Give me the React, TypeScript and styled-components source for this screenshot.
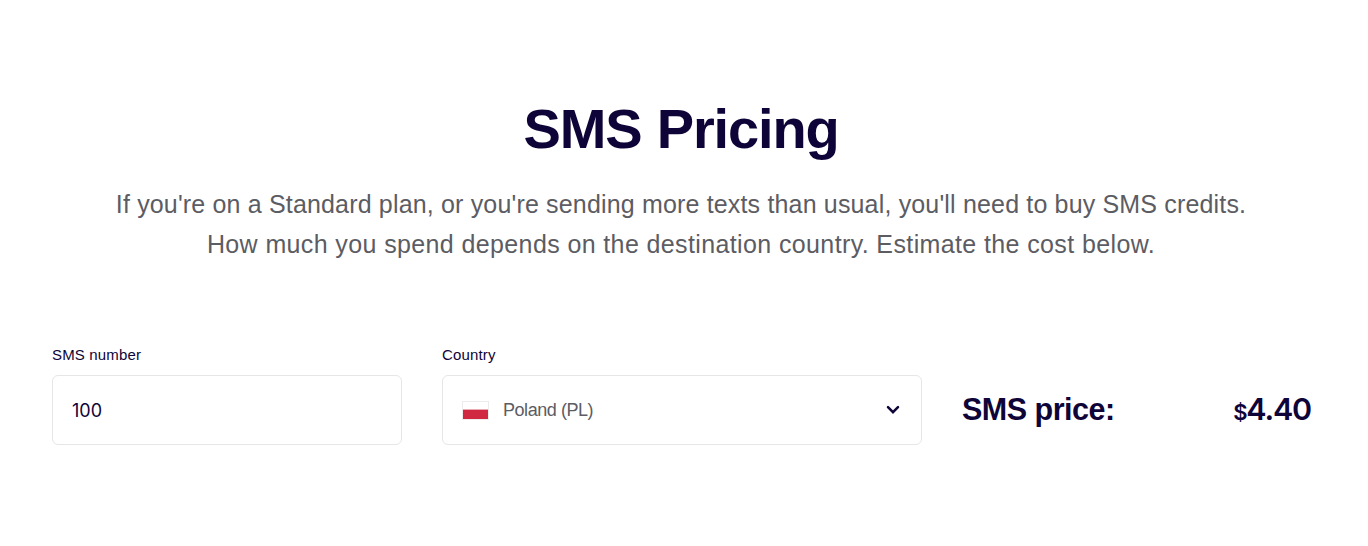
import React from "react";
import styled, { createGlobalStyle } from "styled-components";

const Global = createGlobalStyle`
  * { box-sizing: border-box; }
  body { margin: 0; background: #fff; font-family: "Liberation Sans", Arial, sans-serif; color: #0f0438; }
`;
const Section = styled.section`
  height: 546px; padding: 95px 56px 0 50px; display: flex; flex-direction: column;
`;
const Title = styled.h1`
  margin: 0; text-align: center; font-size: 56px; line-height: 68px; font-weight: 700; letter-spacing: -1.15px; word-spacing: 1px; white-space: nowrap;
`;
const Intro = styled.div`
  margin-top: 21px; display: flex; flex-direction: column; align-items: center; color: #5c5c63;
`;
const Line = styled.p<{ $track: number }>`
  margin: 0; font-size: 25px; line-height: 40px; white-space: nowrap; letter-spacing: ${(p) => p.$track}px;
`;
const Form = styled.div`
  margin: 81px 0 0 2px; display: flex; gap: 40px; align-items: flex-end;
`;
const Field = styled.div<{ $width: number }>`
  width: ${(p) => p.$width}px; display: flex; flex-direction: column;
`;
const Label = styled.label`
  font-size: 15px; line-height: 20px; margin-bottom: 10px; letter-spacing: 0.15px;
`;
const Control = styled.div`
  height: 70px; border: 1px solid #e6e6e8; border-radius: 6px; padding: 0 19px; display: flex; align-items: center; font-size: 18px;
`;
const Amount = styled.span`
  font-family: Inter, "Liberation Sans", sans-serif;
`;
const Flag = styled.span`
  width: 27px; height: 19px; border: 1px solid #ececec; background: linear-gradient(#fff 0 7px, #ecaab4 7px 8px, #d02840 8px); margin-right: 14px;
`;
const Country = styled.span`
  flex: 1; color: #5c5c63; letter-spacing: -0.45px; padding-top: 1px;
`;
const Price = styled.div`
  height: 70px; width: 349px; display: flex; justify-content: space-between; align-items: baseline; padding-top: 16px; font-size: 30.5px; line-height: 36px; white-space: nowrap;
`;
const PriceLabel = styled.span`
  font-weight: 700; letter-spacing: -0.5px;
`;
const Total = styled.span`
  font-family: Inter, "Liberation Sans", sans-serif; font-weight: 600; letter-spacing: -1.2px;
`;
const Currency = styled.span`font-size: 22px;`;

export default function App() {
  return (
    <Section>
      <Global />
      <Title>SMS Pricing</Title>
      <Intro>
        <Line $track={0.165}>If you're on a Standard plan, or you're sending more texts than usual, you'll need to buy SMS credits.</Line>
        <Line $track={0.38}>How much you spend depends on the destination country. Estimate the cost below.</Line>
      </Intro>
      <Form>
        <Field $width={350}>
          <Label>SMS number</Label>
          <Control><Amount>100</Amount></Control>
        </Field>
        <Field $width={480}>
          <Label>Country</Label>
          <Control>
            <Flag />
            <Country>Poland (PL)</Country>
            <svg width="18" height="18" viewBox="0 0 18 18" fill="none" stroke="#0f0438" strokeWidth="2.5" strokeLinecap="round"><path d="M4 6.2l5 5 5-5" /></svg>
          </Control>
        </Field>
        <Price>
          <PriceLabel>SMS price:</PriceLabel>
          <Total><Currency>$</Currency>4.40</Total>
        </Price>
      </Form>
    </Section>
  );
}
